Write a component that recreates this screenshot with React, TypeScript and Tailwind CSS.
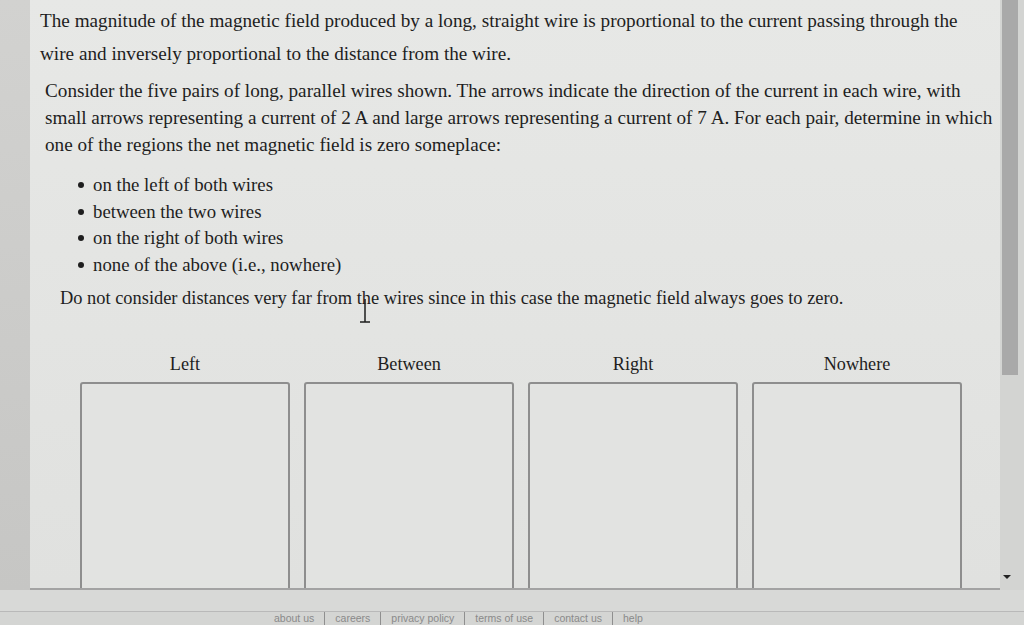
import React from "react";

const serif = { fontFamily: '"Liberation Serif", "Times New Roman", serif' };

const bullets = [
  "on the left of both wires",
  "between the two wires",
  "on the right of both wires",
  "none of the above (i.e., nowhere)",
];

const bins = ["Left", "Between", "Right", "Nowhere"];

const footerLinks = ["about us", "careers", "privacy policy", "terms of use", "contact us", "help"];

export default function App() {
  return (
    <div className="relative h-[625px] w-[1024px] overflow-hidden bg-[#d7d8d6]">
      <div className="flex h-[590px]">
        {/* left edge of the window */}
        <div className="w-[30px] shrink-0 bg-gradient-to-b from-[#d2d2d0] to-[#c6c6c4]" />

        {/* question panel */}
        <div
          className="relative flex-1 overflow-hidden border-b-2 border-[#a3a3a3] bg-gradient-to-b from-[#e7e8e6] to-[#e0e1df] text-[19.2px] text-[#1e1e1e]"
          style={serif}
        >
          <p className="pl-[10px] pt-[4px] leading-[33px]">
            The magnitude of the magnetic field produced by a long, straight wire is proportional to the current passing through the
            <br />
            wire and inversely proportional to the distance from the wire.
          </p>

          <p className="mt-[7px] pl-[15px] leading-[27px]">
            Consider the five pairs of long, parallel wires shown. The arrows indicate the direction of the current in each wire, with
            <br />
            small arrows representing a current of 2 A and large arrows representing a current of 7 A. For each pair, determine in which
            <br />
            one of the regions the net magnetic field is zero someplace:
          </p>

          <ul className="mt-[14px] pl-[48px] text-[18.8px] leading-[26.5px]">
            {bullets.map((b) => (
              <li key={b} className="flex items-center">
                <span className="mr-[9px] h-[6px] w-[6px] rounded-full bg-[#1e1e1e]" />
                {b}
              </li>
            ))}
          </ul>

          <p className="mt-[7px] pl-[30px] text-[18.4px] leading-[26px]">
            Do not consider distances very far from the wires since in this case the magnetic field always goes to zero.
          </p>

          {/* mouse text cursor */}
          <svg className="absolute left-[328px] top-[298px]" width="14" height="26" viewBox="0 0 14 26">
            <path d="M7 1v23M2 24h10" stroke="#1e1e1e" strokeWidth="1.5" fill="none" />
          </svg>

          <div className="mt-[41px] grid grid-cols-[210px_210px_210px_210px] gap-x-[14px] pl-[50px]">
            {bins.map((b) => (
              <div key={b} className="flex flex-col items-center">
                <div className="text-[18.2px] leading-[24px]">{b}</div>
                <div className="mt-[6px] h-[240px] w-full rounded-t-[3px] border-2 border-[#8e8e8e] bg-[#e2e3e1]" />
              </div>
            ))}
          </div>
        </div>

        {/* scrollbar */}
        <div className="relative w-[24px] shrink-0 bg-[#d3d4d2]">
          <div className="ml-[2px] h-[375px] w-[16px] bg-[#a9a9a9]" />
          <svg className="absolute bottom-[10px] left-[2px]" width="10" height="6" viewBox="0 0 10 6">
            <path d="M1 1h8L5 5z" fill="#222" />
          </svg>
        </div>
      </div>

      {/* page footer */}
      <div className="h-[21px] bg-[#d8d9d7]" />
      <div
        className="flex h-[14px] border-t border-[#b9b9b9] bg-[#d4d5d3] pl-[264px] text-[10.5px] leading-[13px] text-[#8a8a8a]"
        style={{ fontFamily: '"Liberation Sans", Arial, sans-serif' }}
      >
        {footerLinks.map((l, i) => (
          <span
            key={l}
            className={i < footerLinks.length - 1 ? "border-r border-[#8f8f8f] px-[10px]" : "px-[10px]"}
          >
            {l}
          </span>
        ))}
      </div>
    </div>
  );
}
